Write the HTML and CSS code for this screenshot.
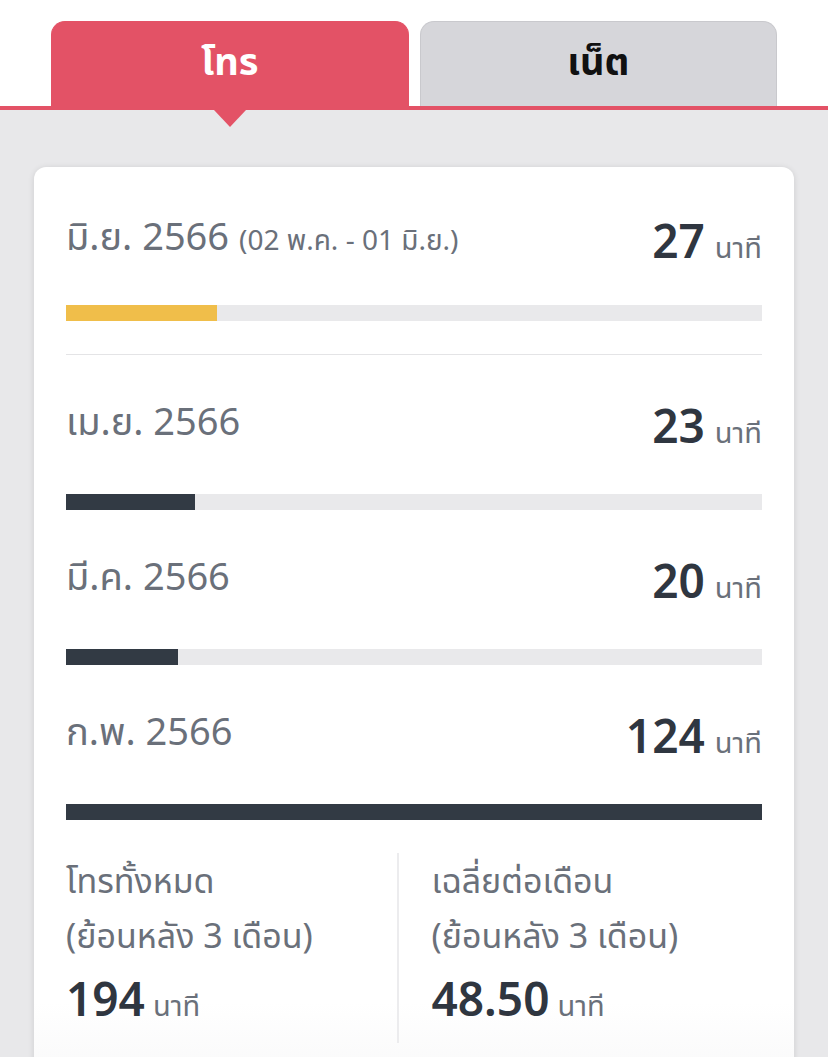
FILE: index.html
```html
<!DOCTYPE html>
<html lang="th">
<head>
  <meta charset="UTF-8">
  <meta name="viewport" content="width=device-width, initial-scale=1.0">
  <title>usage</title>
  <link rel="stylesheet" href="styles.css">
</head>
<body>

  <div class="tabs">
    <div class="tab tab-active">โทร</div>
    <div class="tab">เน็ต</div>
  </div>

  <div class="content">
    <div class="card">

      <div class="item item-first">
        <div class="row">
          <div class="month">มิ.ย. 2566 <span class="range">(02 พ.ค. - 01 มิ.ย.)</span></div>
          <div class="amount"><b>27</b><span>นาที</span></div>
        </div>
        <div class="bar"><div class="fill fill-current" style="width: 151px"></div></div>
      </div>

      <div class="divider"></div>

      <div class="item">
        <div class="row">
          <div class="month">เม.ย. 2566</div>
          <div class="amount"><b>23</b><span>นาที</span></div>
        </div>
        <div class="bar"><div class="fill" style="width: 129px"></div></div>
      </div>

      <div class="item">
        <div class="row">
          <div class="month">มี.ค. 2566</div>
          <div class="amount"><b>20</b><span>นาที</span></div>
        </div>
        <div class="bar"><div class="fill" style="width: 112px"></div></div>
      </div>

      <div class="item">
        <div class="row">
          <div class="month">ก.พ. 2566</div>
          <div class="amount"><b>124</b><span>นาที</span></div>
        </div>
        <div class="bar"><div class="fill" style="width: 100%"></div></div>
      </div>

      <div class="summary">
        <div class="summary-col">
          <div class="summary-label">โทรทั้งหมด</div>
          <div class="summary-label">(ย้อนหลัง 3 เดือน)</div>
          <div class="summary-value"><b>194</b><span>นาที</span></div>
        </div>
        <div class="summary-col summary-right">
          <div class="summary-label">เฉลี่ยต่อเดือน</div>
          <div class="summary-label">(ย้อนหลัง 3 เดือน)</div>
          <div class="summary-value"><b>48.50</b><span>นาที</span></div>
        </div>
      </div>

    </div>
  </div>

</body>
</html>
```

FILE: styles.css
```css
body {
  margin: 0;
  background-color: #e8e8ea;
  font-family: "Noto Sans", "Noto Sans Thai", sans-serif;
  color: #6a707a;
  height: 1057px;
  overflow: hidden;
}

.tabs {
  display: flex;
  gap: 11px;
  padding: 21px 51px 0 51px;
  background-color: #fff;
  border-bottom: 4px solid #e35266;
  height: 85px;
}

.tab {
  flex: 1;
  display: flex;
  align-items: flex-start;
  justify-content: center;
  padding-top: 12px;
  background-color: #d6d6da;
  border: 1px solid #c9c9cd;
  border-bottom: none;
  border-radius: 14px 14px 0 0;
  font-size: 38px;
  font-weight: 700;
  color: #111;
  position: relative;
}

.tab-active {
  background-color: #e35266;
  border-color: #e35266;
  color: #fff;
}

/* little pointer under active tab */
.tab-active::after {
  content: "";
  position: absolute;
  left: 50%;
  bottom: -21px;
  margin-left: -16px;
  border-left: 16px solid transparent;
  border-right: 16px solid transparent;
  border-top: 17px solid #e35266;
}

.content {
  padding: 57px 34px 0 34px;
}

.card {
  background-color: #fff;
  border-radius: 12px;
  box-shadow: 0 1px 6px rgba(0, 0, 0, 0.12);
  padding: 43px 32px 40px 32px;
  background-image: linear-gradient(#fff 85%, #f3f3f4);
  min-height: 900px;
}

.item {
  margin-bottom: 40px;
}

.row {
  display: flex;
  justify-content: space-between;
  align-items: center;
  height: 60px;
}

.month {
  font-size: 38px;
  color: #6a707a;
  margin-top: -4px;
}

.range {
  font-size: 28px;
}

.amount b {
  font-size: 46px;
  font-weight: 600;
  color: #2f3640;
}

.amount span {
  font-size: 29px;
  color: #6a707a;
  margin-left: 10px;
}

.bar {
  margin-top: 39px;
  height: 16px;
  background-color: #e9e9eb;
}

.item-first .bar {
  margin-top: 35px;
}

.item-first {
  margin-bottom: 33px;
}

.fill {
  height: 100%;
  background-color: #323a44;
}

.fill-current {
  background-color: #f0be4a;
}

.divider {
  height: 1px;
  background-color: #e4e4e6;
  margin-bottom: 40px;
}

.summary {
  display: flex;
  margin-top: -7px;
}

.summary-col {
  flex: 1;
  padding: 0 0 14px 0;
}

.summary-right {
  border-left: 2px solid #ececee;
  padding-left: 33px;
}

.summary-label {
  font-size: 34px;
  height: 55px;
  line-height: 55px;
}

.summary-value {
  margin-top: 4px;
}

.summary-value b {
  font-size: 46px;
  font-weight: 600;
  color: #2f3640;
}

.summary-value span {
  font-size: 29px;
  margin-left: 8px;
}
```
